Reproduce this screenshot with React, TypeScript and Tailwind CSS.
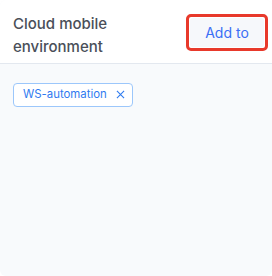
export default function App() {
  return (
    <div className="w-[272px] h-[276px] overflow-hidden rounded-[6px] bg-[#f8fafc] font-['Inter',sans-serif]">
      <div className="flex items-start justify-between border-b border-[#e3e8ef] bg-white pl-[13px] pr-[4px] h-[64px]">
        <h3 className="mt-[12px] w-[120px] text-[15px] font-medium leading-[23px] text-[#4a4f59]">
          Cloud mobile environment
        </h3>
        <div className="mt-[14px] ml-[2px] rounded-[5px] border-[3px] border-[#e8392b] p-[1px]">
          <button className="flex h-[29px] w-[74px] items-center justify-center rounded-[3px] bg-[#f6f8fb] text-[14px] text-[#3a6ff5]">
            Add to
          </button>
        </div>
      </div>
      <div className="px-[13px] pt-[16px]">
        <span className="inline-flex h-[24px] items-center gap-[9px] rounded-[4px] border border-[#9cc7fb] bg-white pl-[9px] pr-[7px] text-[11.4px] text-[#2f7bf0]">
          WS-automation
          <svg width="9" height="9" viewBox="0 0 10 10" fill="none" stroke="currentColor" strokeWidth="1.2">
            <path d="M1 1L9 9M9 1L1 9" />
          </svg>
        </span>
      </div>
    </div>
  )
}
